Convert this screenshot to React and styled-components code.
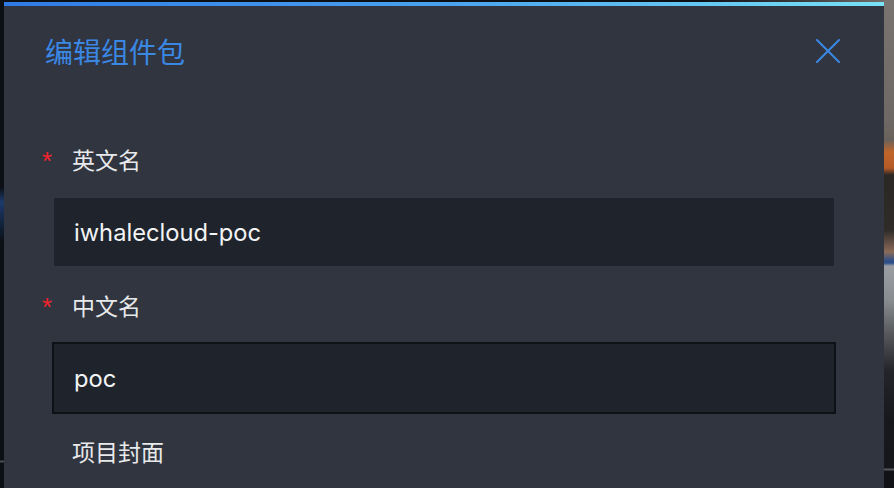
import React from "react";
import styled, { createGlobalStyle } from "styled-components";

const Global = createGlobalStyle`
  html, body { margin: 0; padding: 0; background: #0d1015; overflow: hidden; }
  body { font-family: "Noto Sans CJK SC", "Noto Sans", sans-serif; }
`;

const Page = styled.div`
  display: flex;
  width: 894px;
  height: 488px;
  padding-top: 2px;
  box-sizing: border-box;
  background: linear-gradient(90deg, #0d1015 0px, #0d1015 700px, #3a3a3c 800px, #7a7470 894px);
`;

const LeftEdge = styled.div`
  width: 4px;
  flex: none;
  background: linear-gradient(180deg, #0c0f14 0px, #0c0f14 185px, #1d3a6a 200px, #102036 225px, #0c0f14 240px, #0c0f14 458px, #4a4d52 459px, #4a4d52 460px, #0c0f14 461px);
`;

const RightEdge = styled.div`
  width: 10px;
  flex: none;
  margin-top: -2px;
  background: linear-gradient(180deg,
    #7a7470 0px, #6e6965 120px, #6a625c 140px, #c0652a 152px, #b35a26 168px,
    #2b2725 175px, #2f2b29 230px, #8a6a58 252px, #2c4f8a 261px, #2c4f8a 263px,
    #9a9ea2 266px, #8a8d90 300px, #55575b 335px, #23252a 370px, #16181c 420px,
    #15171b 468px, #55585c 469px, #55585c 470px, #101216 471px, #101216 488px);
`;

const Modal = styled.div`
  width: 880px;
  flex: none;
  display: flex;
  flex-direction: column;
  background: #30353f;
`;

const TopBar = styled.div`
  height: 4px;
  background: linear-gradient(90deg, #2f7be6 0%, #4aa2ee 50%, #78e2f6 100%);
`;

const Header = styled.div`
  height: 90px;
  display: flex;
  align-items: center;
  justify-content: space-between;
  padding: 0 44px 0 41px;
`;

const Title = styled.h2`
  margin: 0;
  font-family: "Noto Sans CJK SC", sans-serif;
  font-weight: 400;
  font-size: 28px;
  line-height: 40px;
  color: #3b87e4;
`;

const CloseButton = styled.button`
  width: 24px;
  height: 24px;
  padding: 0;
  border: 0;
  background: transparent;
  display: flex;
  cursor: pointer;
`;

const Form = styled.div`
  display: flex;
  flex-direction: column;
  gap: 22px;
  padding: 48px 48px 0 48px;
`;

const Item = styled.div`
  display: flex;
  flex-direction: column;
  gap: 20px;
`;

const Label = styled.div`
  display: flex;
  align-items: center;
  height: 32px;
  box-sizing: border-box;
  padding-bottom: 3px;
  margin-left: -10px;
  font-family: "Noto Sans CJK SC", sans-serif;
  font-size: 23px;
  color: #e8e9eb;
`;

const Mark = styled.span`
  width: 30px;
  flex: none;
  font-family: "Liberation Sans", sans-serif;
  font-size: 26px;
  line-height: 1;
  color: #f5232d;
  margin-top: 4px;
`;

const Input = styled.div`
  height: 68px;
  display: flex;
  align-items: center;
  padding: 0 20px;
  background: #1f242c;
  border: 2px solid ${(p) => (p.$focused ? "#0e1115" : "#30353f")};
  font-family: "Inter", "Noto Sans", sans-serif;
  font-size: 23.7px;
  color: #f2f3f5;
`;

function FormItem({ label, required, value, focused }) {
  return (
    <Item>
      <Label>
        <Mark>{required ? "*" : ""}</Mark>
        {label}
      </Label>
      {value !== undefined && <Input $focused={focused}>{value}</Input>}
    </Item>
  );
}

export default function App() {
  return (
    <>
      <Global />
      <Page>
        <LeftEdge />
        <Modal>
          <TopBar />
          <Header>
            <Title>编辑组件包</Title>
            <CloseButton aria-label="close">
              <svg width="24" height="24" viewBox="0 0 24 24">
                <path d="M1 1 L23 23 M23 1 L1 23" stroke="#3b87e4" strokeWidth="2" strokeLinecap="round" fill="none" />
              </svg>
            </CloseButton>
          </Header>
          <Form>
            <FormItem label="英文名" required value="iwhalecloud-poc" />
            <FormItem label="中文名" required value="poc" focused />
            <FormItem label="项目封面" />
          </Form>
        </Modal>
        <RightEdge />
      </Page>
    </>
  );
}
